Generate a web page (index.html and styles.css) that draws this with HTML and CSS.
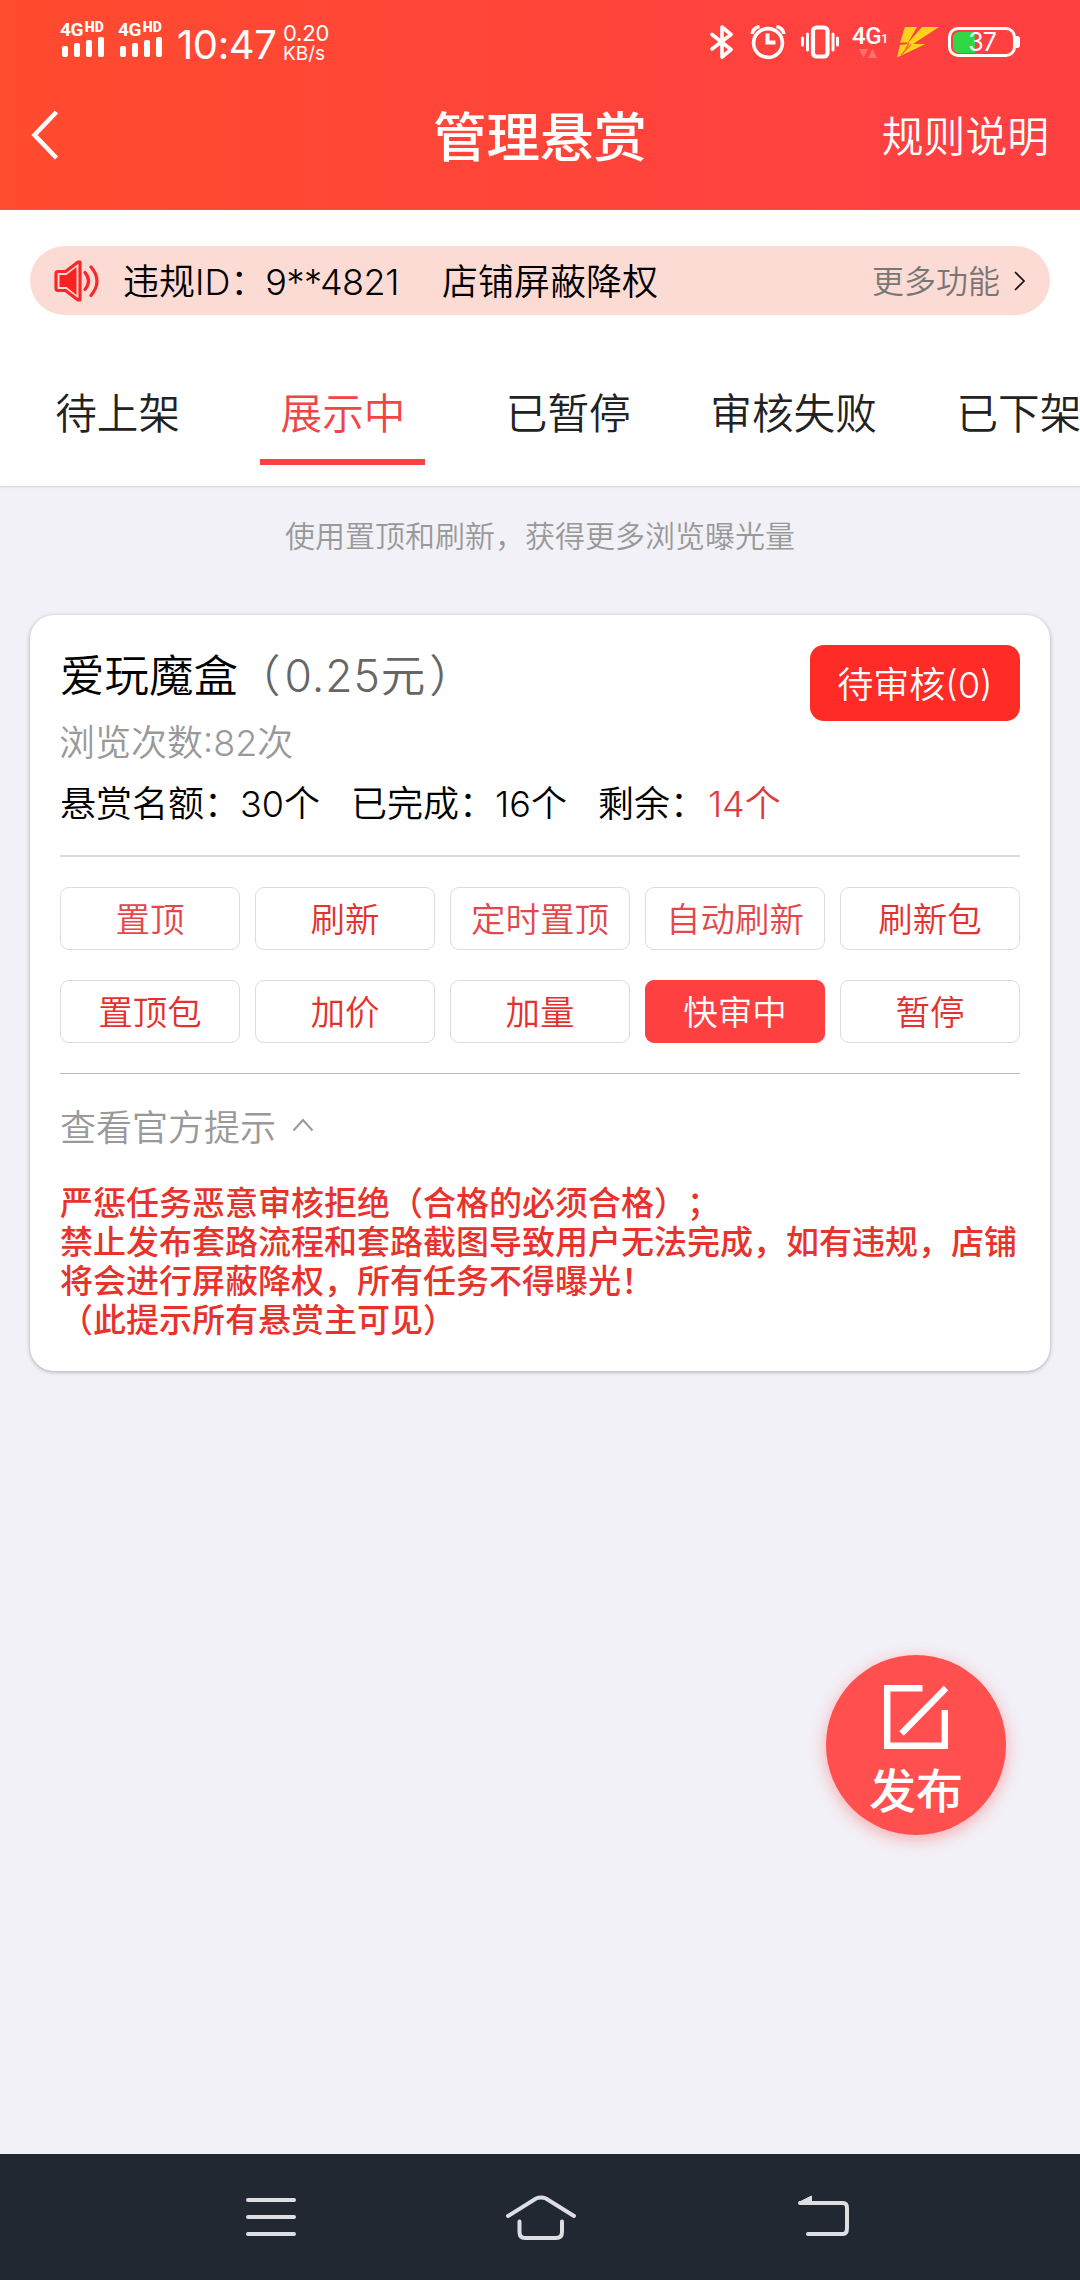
FILE: index.html
```html
<!DOCTYPE html>
<html lang="zh-CN">
<head>
<meta charset="utf-8">
<title>管理悬赏</title>
<link rel="stylesheet" href="styles.css">
</head>
<body>
<div class="screen">
  <header class="header">
    <div class="status">
      <div class="signal">
        <div class="net">4G<span class="hd">HD</span></div>
        <svg width="44" height="20" viewBox="0 0 44 20" fill="#fff"><rect x="0" y="9" width="6" height="11" rx="2"/><rect x="12" y="6" width="6" height="14" rx="2"/><rect x="24" y="3" width="6" height="17" rx="2"/><rect x="36" y="0" width="6" height="20" rx="2"/></svg>
      </div>
      <div class="signal">
        <div class="net">4G<span class="hd">HD</span></div>
        <svg width="44" height="20" viewBox="0 0 44 20" fill="#fff"><rect x="0" y="9" width="6" height="11" rx="2"/><rect x="12" y="6" width="6" height="14" rx="2"/><rect x="24" y="3" width="6" height="17" rx="2"/><rect x="36" y="0" width="6" height="20" rx="2"/></svg>
      </div>
      <div class="time">10:47</div>
      <div class="speed"><span class="rate">0.20</span><span class="unit">KB/s</span></div>
      <div class="status-right">
        <svg class="bluetooth" width="24" height="36" viewBox="0 0 24 36" fill="none" stroke="#fff" stroke-width="3.6" stroke-linejoin="round" stroke-linecap="round"><path d="M2 10.500L21 25.500L12 33V3L21 10.500L2 25"/></svg>
        <svg class="alarm" width="36" height="36" viewBox="0 0 36 36" fill="none" stroke="#fff" stroke-width="3.600"><circle cx="18" cy="19" r="14.400"/><path d="M17.500 9.500V18.500H25.500" stroke-width="4"/><path d="M2 10Q3 4 9.500 2.500M26.500 2.500Q33 4 34 10" stroke-width="3.400"/></svg>
        <svg class="vibrate" width="38" height="34" viewBox="0 0 38 34" fill="none" stroke="#fff" stroke-linecap="round"><rect x="12" y="2.500" width="14.500" height="29" rx="3.500" stroke-width="4.200"/><path d="M1.500 13V20M6.500 9V25M32 9V25M36.500 13V20" stroke-width="3"/></svg>
        <div class="data">
          <div class="data-net">4G<span class="sim">1</span></div>
          <svg width="18" height="10" viewBox="0 0 18 10" fill="#ff706d"><path d="M0 0H9L4.500 9zM9 9L13.500 0L18 9z"/></svg>
        </div>
        <svg class="bolt" width="42" height="31" viewBox="0 0 42 31" fill="#ffd21f"><path d="M8 0H20L11 15.500H3zM25 0H42L16 17H28.500L0 30.500L3 18L10 17z"/><path d="M12 16L7.500 24M14 17.500L4 28" stroke="#ff6a32" stroke-width="1.300"/></svg>
        <div class="battery"><div class="cell"><span class="charge"></span><span class="level">37</span></div><span class="cap"></span></div>
      </div>
    </div>
    <nav class="titlebar">
      <svg class="back" width="28" height="50" viewBox="0 0 28 50" fill="none" stroke="#fff" stroke-width="4.500"><path d="M25.500 2L3.500 25L25.500 48"/></svg>
      <h1 class="title">管理悬赏</h1>
      <a class="rules">规则说明</a>
    </nav>
  </header>

  <section class="top">
    <div class="notice">
      <svg class="speaker" width="46" height="42" viewBox="0 0 46 42" fill="none" stroke="#f9272a"><path d="M4 11.500H11.500L24 2H26V40H24L11.500 30.500H4Q2 30.500 2 28.500V13.500Q2 11.500 4 11.500z" stroke-width="3.200" stroke-linejoin="round"/><path d="M5.500 15H12.500L22.500 7V35L12.500 27H5.500z" fill="#ff2022" stroke="none"/><path d="M31 12.500Q38 21 31 29.500M37 7Q49 21 37 35.500" stroke-width="3.200" stroke-linecap="round"/></svg>
      <span class="notice-text">违规ID：<span class="notice-id">9**4821</span></span>
      <span class="notice-action">店铺屏蔽降权</span>
      <span class="more">更多功能</span>
      <svg class="chevron" width="12" height="20" viewBox="0 0 12 20" fill="none" stroke="#111" stroke-width="1.700"><path d="M1 1L10 10L1 19"/></svg>
    </div>
    <div class="tabs">
      <div class="tab">待上架</div>
      <div class="tab active">展示中</div>
      <div class="tab">已暂停</div>
      <div class="tab">审核失败</div>
      <div class="tab">已下架</div>
    </div>
  </section>

  <main class="main">
    <p class="hint">使用置顶和刷新，获得更多浏览曝光量</p>
    <article class="card">
      <div class="summary">
        <div class="info">
          <h2 class="name">爱玩魔盒<span class="price"><span class="open">（</span><span class="amount">0.25</span>元<span class="close">）</span></span></h2>
          <div class="views">浏览次数:82次</div>
          <div class="stats"><span>悬赏名额：30个</span><span>已完成：16个</span><span>剩余：<b class="left">14个</b></span></div>
        </div>
        <div class="pending">待审核(0)</div>
      </div>
      <div class="actions">
        <div class="btn soft">置顶</div>
        <div class="btn">刷新</div>
        <div class="btn soft">定时置顶</div>
        <div class="btn soft">自动刷新</div>
        <div class="btn">刷新包</div>
        <div class="btn">置顶包</div>
        <div class="btn">加价</div>
        <div class="btn">加量</div>
        <div class="btn filled">快审中</div>
        <div class="btn">暂停</div>
      </div>
      <div class="tips-toggle">查看官方提示<svg width="22" height="14" viewBox="0 0 22 14" fill="none" stroke="#999" stroke-width="2"><path d="M1.500 12.500L11 2L20.500 12.500"/></svg></div>
      <div class="tips">
        <p>严惩任务恶意审核拒绝（合格的必须合格）；</p>
        <p>禁止发布套路流程和套路截图导致用户无法完成，如有违规，店铺将会进行屏蔽降权，所有任务不得曝光！</p>
        <p>（此提示所有悬赏主可见）</p>
      </div>
    </article>
  </main>

  <div class="fab">
    <svg width="66" height="66" viewBox="0 0 66 66" fill="none" stroke="#fff" stroke-width="6.400"><path d="M39.500 4.200H4.200V61.800H61.800V26"/><path d="M18.500 49.500L63 4"/></svg>
    <span>发布</span>
  </div>

  <footer class="navbar">
    <svg width="52" height="44" viewBox="0 0 52 44" fill="none" stroke="#dddee1" stroke-width="4" stroke-linecap="round"><path d="M3 5H49M3 22H49M3 39H49"/></svg>
    <svg class="home" width="72" height="46" viewBox="0 0 72 46" fill="none" stroke="#dddee1" stroke-width="4" stroke-linecap="round"><path d="M3 21L31 3.500Q36 1.500 41 3.500L69 21M14.500 26.500V37Q14.500 43 20 43H51Q57 43 57 37V26.500"/></svg>
    <svg width="54" height="44" viewBox="0 0 54 44" fill="none" stroke="#dddee1" stroke-width="4" stroke-linecap="round"><path d="M3 8H46Q50 8 50 13V33Q50 39 46 39H11"/><path d="M2.500 7L14.500 1V8z" fill="#dddee1" stroke-width="1"/></svg>
  </footer>
</div>
</body>
</html>
```
FILE: styles.css
```css
* { box-sizing: border-box; }
body, h1, h2, p { margin: 0; }
body {
  width: 1080px;
  height: 2280px;
  overflow: hidden;
  background: #f2f1f7;
  font-family: Inter, "Noto Sans CJK SC", sans-serif;
  font-weight: 350;
  text-spacing-trim: space-all;
}
svg { display: block; flex: none; }
.screen {
  position: relative;
  display: flex;
  flex-direction: column;
  width: 1080px;
  height: 2280px;
}

/* header */
.header {
  flex: none;
  height: 210px;
  color: #fff;
  background: linear-gradient(90deg, #ff4b2e, #ff4041 85%);
}
.status {
  display: flex;
  align-items: flex-start;
  height: 80px;
  padding: 20px 60px 0 60px;
}
.signal { width: 58px; flex: none; }
.signal svg { margin: -2px 0 0 2px; }
.net {
  display: flex;
  height: 19px;
  font: 700 19px/19px Roboto, sans-serif;
  letter-spacing: -0.5px;
}
.hd { margin-left: 2px; font-size: 14px; line-height: 14px; font-weight: 900; letter-spacing: 0; }
.time {
  flex: none;
  width: 106px;
  margin-left: 1px;
  padding-top: 5px;
  font-size: 40px;
  line-height: 40px;
  font-weight: 400;
  letter-spacing: -0.4px;
  white-space: nowrap;
}
.speed { display: flex; flex-direction: column; font-weight: 400; padding-top: 2px; }
.rate { font-size: 22px; line-height: 22px; letter-spacing: -0.2px; }
.unit { font-size: 19px; line-height: 19px; }
.status-right { display: flex; margin-left: auto; }
.bluetooth { margin: 4px 16px 0 0; }
.alarm { margin: 4px 15px 0 0; }
.vibrate { margin: 5px 13px 0 0; }
.data { width: 36px; margin-right: 9px; }
.data-net { display: flex; align-items: flex-end; height: 29px; padding-bottom: 1px; font: 500 24px/24px Roboto, sans-serif; letter-spacing: -0.5px; }
.sim { font-size: 13px; line-height: 19px; }
.data svg { margin-left: 7px; }
.bolt { margin: 7px 9px 0 0; }
.battery { display: flex; align-items: center; height: 30px; margin-top: 7px; }
.cell {
  display: grid;
  width: 68px;
  height: 30px;
  padding: 2px;
  border: 3px solid #fff;
  border-radius: 10px;
}
.cell > * { grid-area: 1 / 1; }
.charge { width: 22px; border-radius: 6px 0 0 6px; background: #2fd746; }
.level { font-size: 25px; line-height: 21px; font-weight: 400; text-align: center; letter-spacing: -1px; }
.cap { width: 4px; height: 12px; border-radius: 0 3px 3px 0; background: #fff; }
.titlebar {
  display: grid;
  grid-template-columns: 1fr auto 1fr;
  align-items: center;
  height: 114px;
  padding: 0 31px;
}
.back { margin-top: -4px; }
.title { padding-top: 1px; font-size: 53.5px; line-height: 70px; font-weight: 500; }
.rules { justify-self: end; font-size: 41.8px; line-height: 60px; }

/* notice and tabs */
.top {
  flex: none;
  height: 276px;
  padding-top: 36px;
  background: #fff;
  box-shadow: 0 1px 2px #cfcfd3;
}
.notice {
  display: flex;
  align-items: center;
  height: 69px;
  margin: 0 30px;
  padding: 0 24px 0 24px;
  border-radius: 35px;
  background: #fddbd5;
  color: #000;
  font-size: 36px;
  line-height: 50px;
  white-space: nowrap;
}
.notice > span { padding-top: 2px; }
.speaker { margin-right: 23px; }
.notice-text { width: 319px; }
.notice-id { margin-left: -1px; letter-spacing: -0.5px; }
.more { margin-left: auto; margin-right: 14px; color: #777; font-size: 32px; }
.tabs {
  display: flex;
  height: 171px;
  padding-left: 5px;
  overflow: hidden;
}
.tab {
  display: flex;
  flex: none;
  flex-direction: column;
  align-items: center;
  width: 225.3px;
  padding-top: 69px;
  color: #222;
  font-size: 41.6px;
  line-height: 60px;
}
.active { color: #f14446; }
.active::after { content: ""; width: 165px; height: 6px; margin-top: 15px; background: #f84243; }

/* bounty card */
.main { flex: 1; }
.hint { padding-top: 25px; color: #999; font-size: 30px; line-height: 50px; text-align: center; }
.card {
  height: 756px;
  margin: 54px 30px 0;
  padding: 30px;
  border-radius: 24px;
  background: #fff;
  box-shadow: 0 1px 4px rgba(0, 0, 0, .3);
  color: #000;
  font-size: 36px;
}
.summary { display: flex; justify-content: space-between; height: 212px; border-bottom: 2px solid #dbdbdb; white-space: nowrap; }
.name { font-size: 44.5px; line-height: 62px; font-weight: 350; }
.price { color: #666; }
.open { margin-left: -2px; margin-right: 2px; }
.amount { margin-left: 2px; letter-spacing: 0.9px; }
.close { margin-left: 4px; }
.views { margin-top: 11px; margin-left: -1px; color: #999; line-height: 50px; }
.stats { display: flex; gap: 31px; margin-top: 11px; line-height: 50px; }
.left { margin-left: 2px; color: #de3b40; font-weight: 350; }
.pending {
  width: 210px;
  height: 76px;
  padding-top: 2px;
  border-radius: 14px;
  background: #ff2b27;
  color: #fff;
  line-height: 76px;
  text-align: center;
}
.actions {
  display: grid;
  grid-template-columns: repeat(5, 180px);
  grid-auto-rows: 63px;
  gap: 30px 15px;
  height: 217px;
  padding-top: 30px;
  border-bottom: 1px solid #bbb;
}
.btn {
  border: 1px solid #dcdcdc;
  border-radius: 9px;
  color: #e3322e;
  font-size: 34.5px;
  line-height: 63px;
  text-align: center;
}
.soft { color: #e4474a; }
.filled { border-color: #ff4041; background: #ff4041; color: #fff; }
.tips-toggle { display: flex; align-items: center; gap: 16px; height: 50px; margin-top: 26px; color: #999; }
.tips { margin-top: 34px; color: #e8332c; font-size: 33px; line-height: 39px; font-weight: 500; }

/* floating publish button */
.fab {
  position: absolute;
  left: 826px;
  top: 1655px;
  display: flex;
  flex-direction: column;
  align-items: center;
  width: 180px;
  height: 180px;
  padding-top: 29px;
  border-radius: 50%;
  background: #ff504f;
  box-shadow: 0 4px 16px rgba(255, 80, 79, .45);
  color: #fff;
  font-size: 47px;
  line-height: 60px;
  font-weight: 500;
}
.fab span { margin-top: 11px; }

/* system navigation */
.navbar {
  display: flex;
  flex: none;
  align-items: flex-start;
  height: 126px;
  padding: 41px 0 0 245px;
  background: #212832;
}
.home { margin: 0 220px 0 208px; }
```
